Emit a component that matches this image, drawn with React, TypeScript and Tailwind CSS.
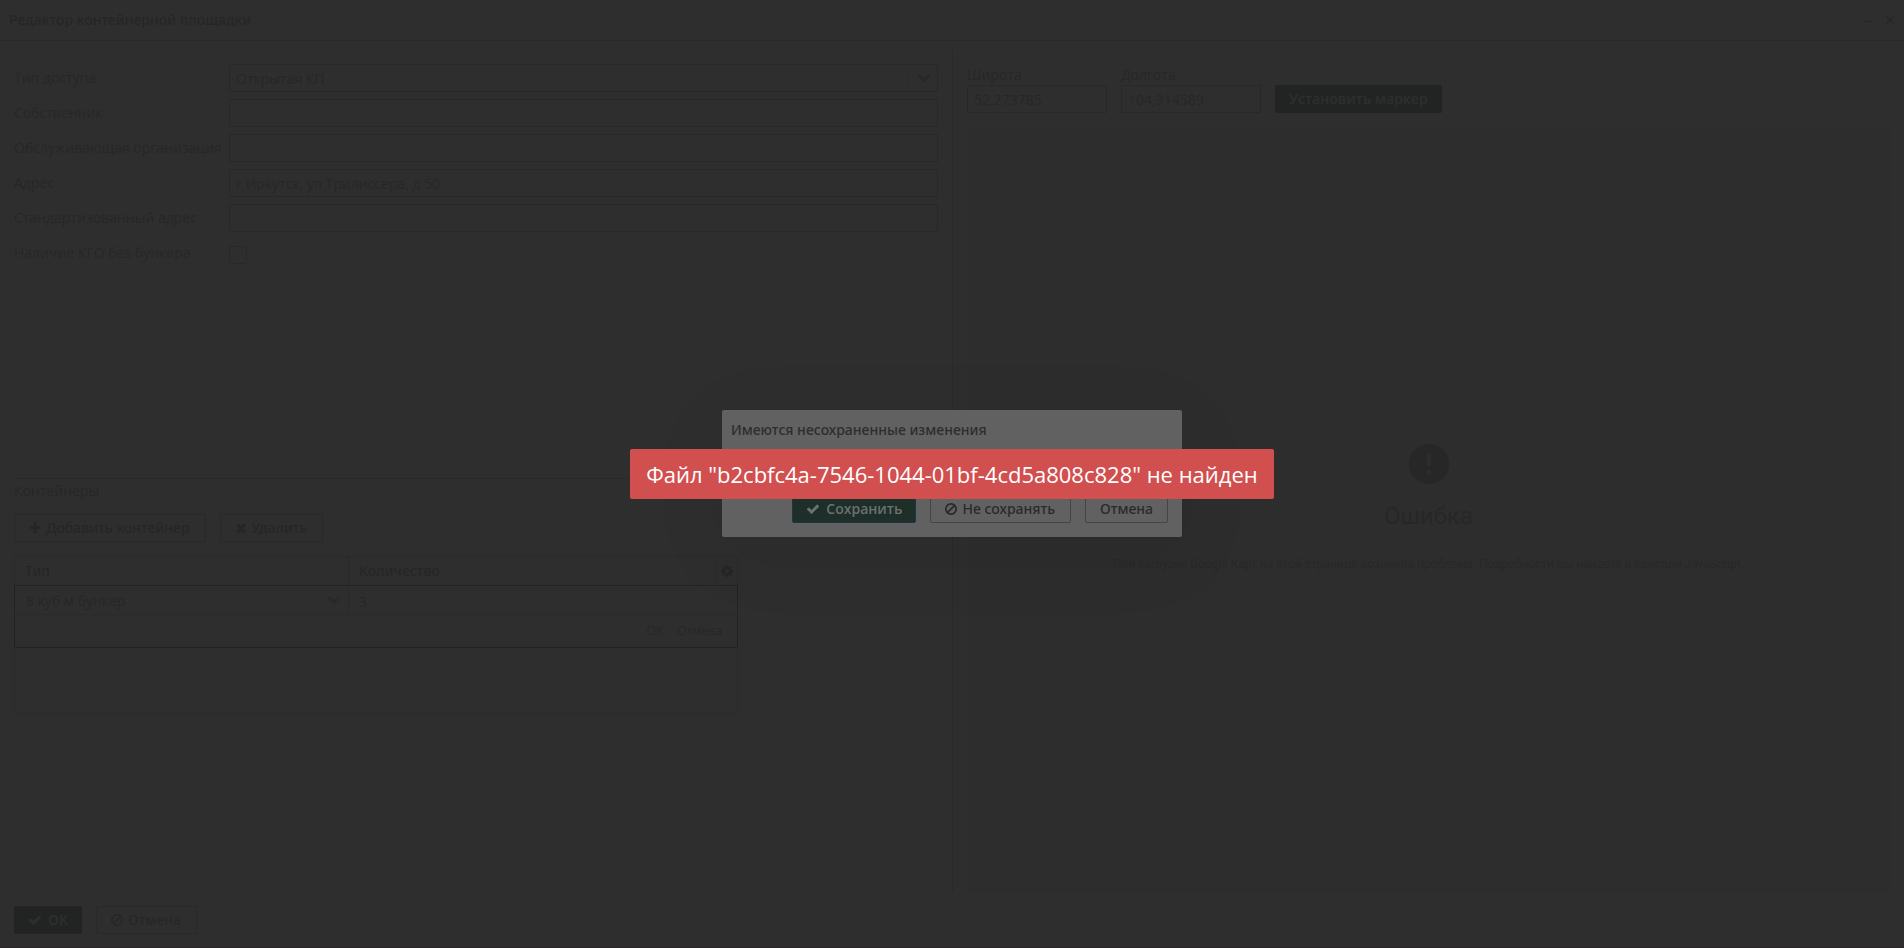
import type { ReactNode } from "react";

const ICONS = {
  check:
    "M1671 566q0 40-28 68l-724 724-136 136q-28 28-68 28t-68-28l-136-136-362-362q-28-28-28-68t28-68l136-136q28-28 68-28t68 28l294 295 656-657q28-28 68-28t68 28l136 136q28 28 28 68z",
  times:
    "M1490 1322q0 40-28 68l-136 136q-28 28-68 28t-68-28l-294-294-294 294q-28 28-68 28t-68-28l-136-136q-28-28-28-68t28-68l294-294-294-294q-28-28-28-68t28-68l136-136q28-28 68-28t68 28l294 294 294-294q28-28 68-28t68 28l136 136q28 28 28 68t-28 68l-294 294 294 294q28 28 28 68z",
  plus:
    "M1600 736v192q0 40-28 68t-68 28h-416v416q0 40-28 68t-68 28h-192q-40 0-68-28t-28-68v-416h-416q-40 0-68-28t-28-68v-192q0-40 28-68t68-28h416v-416q0-40 28-68t68-28h192q40 0 68 28t28 68v416h416q40 0 68 28t28 68z",
  ban:
    "M1440 893q0-161-87-295l-754 753q137 89 297 89 111 0 211.5-43.5t173.5-116.5 116-174.5 43-212.5zm-999 299l755-754q-135-91-300-91-148 0-273 73t-198 199-73 274q0 162 89 299zm1223-299q0 157-61 300t-163.5 246-245 164-298.5 61-298.5-61-245-164-163.5-246-61-300 61-299.5 163.5-245.5 245-164 298.5-61 298.5 61 245 164 163.5 245.5 61 299.5z",
  cog:
    "M1152 896q0-106-75-181t-181-75-181 75-75 181 75 181 181 75 181-75 75-181zm512-109v222q0 12-8 23t-20 13l-185 28q-19 54-39 91 35 50 107 138 10 12 10 25t-9 23q-27 37-99 108t-94 71q-12 0-26-9l-138-108q-44 23-91 38-16 136-29 186-7 28-36 28h-222q-14 0-24.5-8.5t-11.5-21.5l-28-184q-49-16-90-37l-141 107q-10 9-25 9-14 0-25-11-126-114-165-168-7-10-7-23 0-12 8-23 15-21 51-66.5t54-70.5q-27-50-41-99l-183-27q-13-2-21-12.5t-8-23.5v-222q0-12 8-23t19-13l186-28q14-46 39-92-40-57-107-138-10-12-10-24 0-10 9-23 26-36 98.5-107.5t94.5-71.5q13 0 26 10l138 107q44-23 91-38 16-136 29-186 7-28 36-28h222q14 0 24.5 8.5t11.5 21.5l28 184q49 16 90 37l142-107q9-9 24-9 13 0 25 10 129 119 165 170 7 8 7 22 0 12-8 23-15 21-51 66.5t-54 70.5q26 50 41 98l183 28q13 2 21 12.5t8 23.5z",
};

function Icon({ name }: { name: keyof typeof ICONS }) {
  return (
    <svg className="size-3.5 shrink-0" viewBox="0 0 1792 1792" fill="currentColor" aria-hidden="true">
      <path d={ICONS[name]} />
    </svg>
  );
}

function Chevron() {
  return (
    <svg className="size-3.5" viewBox="0 0 14 14" fill="none" stroke="currentColor" strokeWidth="2.6" strokeLinecap="round" aria-hidden="true">
      <path d="M2.4 4.8 7 9.4l4.6-4.6" />
    </svg>
  );
}

const MEDIUM = "font-['Noto_Sans','Open_Sans',sans-serif] font-medium";
const PRIMARY = "flex h-7 items-center gap-1.5 rounded-xs border px-[13px] font-semibold";
const SECONDARY = "flex h-7 items-center gap-1 rounded-xs border pl-[13px] pr-[15px]";
const FIELD = "h-7 w-full rounded-xs border border-[#282828] bg-transparent px-1.5 outline-none";

function Row({ id, label, children }: { id: string; label: string; children: ReactNode }) {
  return (
    <>
      <label htmlFor={id} className="whitespace-nowrap">
        {label}
      </label>
      {children}
    </>
  );
}

function Combo({ id, label, value, className }: { id: string; label?: string; value: string; className: string }) {
  return (
    <div className="grid items-center">
      <select id={id} aria-label={label} className={`col-start-1 row-start-1 appearance-none pt-0.5 ${className}`}>
        <option>{value}</option>
      </select>
      <span className="pointer-events-none col-start-1 row-start-1 flex h-[26px] w-[30px] items-center justify-center justify-self-end border-l border-[#2c2c2c] text-[#282828]">
        <Chevron />
      </span>
    </div>
  );
}

function Header() {
  return (
    <header className="flex h-[41px] items-center justify-between border-b border-[#292929] pr-2.5 pl-[9px]">
      <h1 className={`${MEDIUM} text-[#262626]`}>Редактор контейнерной площадки</h1>
      <div className="flex gap-3.5 text-[#262626]">
        <button type="button" aria-label="Свернуть">
          <svg className="size-2" viewBox="0 0 8 8" stroke="currentColor" strokeWidth="1" aria-hidden="true">
            <path d="M0 5.5h8" />
          </svg>
        </button>
        <button type="button" aria-label="Закрыть">
          <svg className="size-2" viewBox="0 0 8 8" stroke="currentColor" strokeWidth="1.2" aria-hidden="true">
            <path d="m.5.5 7 7m0-7-7 7" />
          </svg>
        </button>
      </div>
    </header>
  );
}

function Containers() {
  return (
    <section className="border-t border-[#292929]">
      <h2 className="pt-0.5 leading-5">Контейнеры</h2>
      <div className={`${MEDIUM} mt-[13px] flex gap-3.5 text-[#262626]`}>
        <button type="button" className={`${SECONDARY} border-[#292929]`}>
          <Icon name="plus" />
          Добавить контейнер
        </button>
        <button type="button" className={`${SECONDARY} border-[#292929]`}>
          <Icon name="times" />
          Удалить
        </button>
      </div>
      <div className="mt-3.5 w-[724px]">
        <table className="w-full table-fixed border-collapse border border-[#2a2a2a]">
          <colgroup>
            <col className="w-[334px]" />
            <col />
            <col className="w-[22px]" />
          </colgroup>
          <thead className={MEDIUM}>
            <tr className="h-[29px] text-left text-[#262626]">
              <th className="pl-2.5 font-medium">Тип</th>
              <th className="border-l border-[#292929] pl-2.5 font-medium">Количество</th>
              <th className="border-l border-[#2a2a2a] p-0">
                <button type="button" aria-label="Настройки" className="flex w-full justify-center">
                  <Icon name="cog" />
                </button>
              </th>
            </tr>
          </thead>
          <tbody className="border border-[#222222]">
            <tr className="h-[29px]">
              <td className="p-0">
                <Combo id="type" label="Тип" value="8 куб м бункер" className="h-7 w-full bg-transparent px-[11px] outline-none" />
              </td>
              <td className="border-l border-[#292929] p-0" colSpan={2}>
                <input aria-label="Количество" defaultValue="3" className="h-7 w-full bg-transparent px-2.5 pt-0.5 outline-none" />
              </td>
            </tr>
            <tr className="h-[33px]">
              <td colSpan={3} className="border-t border-[#2a2a2a] p-0">
                <div className="flex justify-end gap-3.5 pr-[15px] text-xs">
                  <button type="button">OK</button>
                  <button type="button">Отмена</button>
                </div>
              </td>
            </tr>
          </tbody>
        </table>
        <div className="h-[66px] border-x border-b border-[#2a2a2a]" />
      </div>
    </section>
  );
}

function LeftPane() {
  return (
    <div className="flex flex-col pt-3.5 pr-3.5 pl-3.5">
      <div className="grid h-[414px] grid-cols-[208px_1fr] content-start items-center gap-[7px]">
        <Row id="access" label="Тип доступа">
          <Combo id="access" value="Открытая КП" className={FIELD} />
        </Row>
        <Row id="owner" label="Собственник">
          <input id="owner" className={FIELD} />
        </Row>
        <Row id="org" label="Обслуживающая организация">
          <input id="org" className={FIELD} />
        </Row>
        <Row id="address" label="Адрес">
          <input id="address" defaultValue="г Иркутск, ул Трилиссера, д 50" className={FIELD} />
        </Row>
        <Row id="std" label="Стандартизованный адрес">
          <input id="std" className={FIELD} />
        </Row>
        <Row id="kgo" label="Наличие КГО без бункера">
          <div className="flex h-7 items-center pt-1">
            <input id="kgo" type="checkbox" className="size-[18px] appearance-none rounded-xs border border-[#282828]" />
          </div>
        </Row>
      </div>
      <Containers />
    </div>
  );
}

function RightPane() {
  return (
    <div className="flex flex-col border-l border-[#292929] pr-3.5 pl-3.5">
      <div className="flex items-end gap-3.5 pt-3.5">
        <div className="w-[140px]">
          <label htmlFor="lat" className="block leading-[21px]">
            Широта
          </label>
          <input id="lat" defaultValue="52,273785" className={FIELD} />
        </div>
        <div className="w-[140px]">
          <label htmlFor="lon" className="block leading-[21px]">
            Долгота
          </label>
          <input id="lon" defaultValue="104,314589" className={FIELD} />
        </div>
        <button type="button" className={`${PRIMARY} border-[#222423] bg-[#222423] text-[#2d2f2e]`}>
          Установить маркер
        </button>
      </div>
      <div className="mt-3.5 flex flex-1 flex-col items-center justify-center bg-[#2d2d2d] pb-0.5 font-[Roboto,sans-serif]">
        <svg className="size-10" viewBox="0 0 40 40" aria-hidden="true">
          <circle cx="20" cy="20" r="20" fill="#272727" />
          <path fill="#2d2d2d" d="M18 10h4v12h-4zM18 26h4v4h-4z" />
        </svg>
        <p className="mt-4 text-2xl leading-8 text-[#272727]">Ошибка</p>
        <p className="mt-[22px] text-xs leading-5 text-[#282828]">
          При загрузке Google Карт на этой странице возникла проблема. Подробности вы найдете в консоли JavaScript.
        </p>
      </div>
    </div>
  );
}

function UnsavedDialog() {
  return (
    <div className="absolute inset-0 flex items-center justify-center">
      <div
        role="dialog"
        aria-labelledby="unsaved"
        className="flex h-[127px] w-[460px] flex-col justify-between rounded-xs bg-[#616161] px-3.5 pt-2.5 pb-3.5 shadow-[0_16px_80px_rgba(0,0,0,0.07)]"
      >
        <h2 id="unsaved" className={`${MEDIUM} -ml-[5px] leading-5 text-[#2d2d2d]`}>
          Имеются несохраненные изменения
        </h2>
        <div className="flex justify-end gap-3.5 text-[#2a2a2a]">
          <button type="button" className={`${PRIMARY} border-[#1e3440] bg-[#1e2e29] text-[#6a716e]`}>
            <Icon name="check" />
            Сохранить
          </button>
          <button type="button" className={`${SECONDARY} ${MEDIUM} border-[#454545]`}>
            <Icon name="ban" />
            Не сохранять
          </button>
          <button type="button" className={`${MEDIUM} h-7 rounded-xs border border-[#454545] px-3.5`}>
            Отмена
          </button>
        </div>
      </div>
    </div>
  );
}

function Toast() {
  return (
    <div className="absolute inset-0 flex items-center justify-center">
      <div role="alert" className="rounded-xs bg-[#d14f4f] px-4 py-[9px] text-[22px] leading-8 whitespace-nowrap text-white">
        Файл "b2cbfc4a-7546-1044-01bf-4cd5a808c828" не найден
      </div>
    </div>
  );
}

export default function App() {
  return (
    <div className="relative flex min-h-screen flex-col border-b border-[#2b272b] bg-[#2e2e2e] font-['Open_Sans','Noto_Sans',sans-serif] text-sm text-[#272727]">
      <Header />
      <main className="mt-[9px] grid flex-1 grid-cols-2">
        <LeftPane />
        <RightPane />
      </main>
      <footer className="flex gap-3.5 px-3.5 pt-3.5 pb-[13px]">
        <button type="button" className={`${PRIMARY} border-[#222423] bg-[#222423] text-[#2d2f2e]`}>
          <Icon name="check" />
          OK
        </button>
        <button type="button" className={`${SECONDARY} ${MEDIUM} border-[#292929]`}>
          <Icon name="ban" />
          Отмена
        </button>
      </footer>
      <UnsavedDialog />
      <Toast />
    </div>
  );
}
